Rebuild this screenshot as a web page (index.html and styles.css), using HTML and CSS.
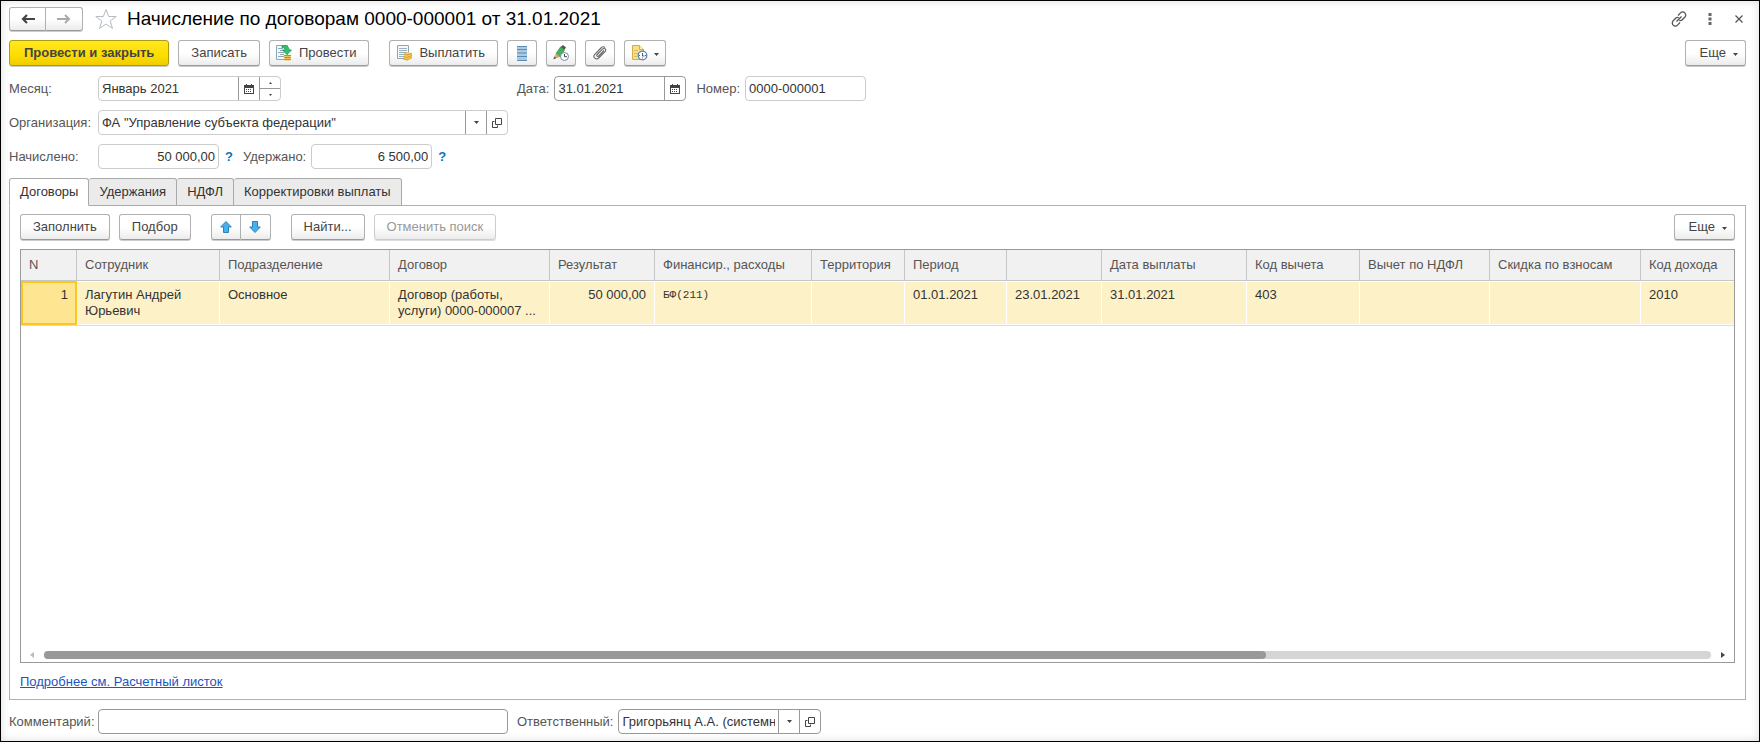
FILE: index.html
```html
<!DOCTYPE html>
<html lang="ru">
<head>
<meta charset="utf-8">
<title>Начисление по договорам 0000-000001 от 31.01.2021</title>
<link rel="stylesheet" href="styles.css">
</head>
<body>
<svg class="defs" aria-hidden="true">
  <symbol id="calendar" viewBox="0 0 10 10"><path d="M0 1h10v9H0zM1 4v5h8V4z" fill="#444" fill-rule="evenodd"/><path d="M2 0h1v2H2zM7 0h1v2H7z" fill="#444"/><path d="M2 5h1v1H2zM4 5h1v1H4zM6 5h1v1H6zM2 7h1v1H2zM4 7h1v1H4zM6 7h1v1H6z" fill="#444"/></symbol>
  <symbol id="open" viewBox="0 0 10 10"><path d="M3.500 .5h6v6h-6zM2.500 3.500h-2v6h5v-2" fill="none" stroke="#444"/></symbol>
  <symbol id="caret" viewBox="0 0 5 3"><path d="M0 0h5L2.500 3z" fill="#444"/></symbol>
</svg>
<main class="window">
  <header class="titlebar">
    <div class="pair">
      <button class="btn nav" aria-label="Назад"><svg width="14" height="10" viewBox="0 0 14 10"><path d="M14 5H3M6 1L2 5l4 4" fill="none" stroke="#444" stroke-width="2.200"/></svg></button>
      <button class="btn nav" aria-label="Вперед"><svg width="14" height="10" viewBox="0 0 14 10"><path d="M0 5h11M8 1l4 4-4 4" fill="none" stroke="#aaa" stroke-width="2"/></svg></button>
    </div>
    <button class="plain" aria-label="Избранное"><svg width="24" height="22" viewBox="0 0 24 22"><path d="M12 1.500l2.700 7h7.500l-6 4.500 2.300 7.500-6.500-4.500-6.500 4.500L7.800 13l-6-4.500h7.500z" fill="#fff" stroke="#b5bbc2"/></svg></button>
    <h1>Начисление по договорам 0000-000001 от 31.01.2021</h1>
    <div class="window-tools">
      <button class="plain" aria-label="Ссылка"><svg width="16" height="16" viewBox="0 0 16 16" fill="none" stroke="#555" stroke-width="1.300"><path d="M7 4.500l2.500-2.600a2.900 2.900 0 0 1 4.300 0 3 3 0 0 1 0 4.300l-2.500 2.500a2.900 2.900 0 0 1-3 .7M9 11.500l-2.500 2.600a2.900 2.900 0 0 1-4.300 0 3 3 0 0 1 0-4.300l2.500-2.500a2.900 2.900 0 0 1 3-.7M5.500 10.500l5-5"/></svg></button>
      <button class="plain" aria-label="Меню"><svg width="4" height="12" viewBox="0 0 4 12"><path d="M.5 0h3v3h-3zM.5 4.500h3v3h-3zM.5 9h3v3h-3z" fill="#666"/></svg></button>
      <button class="plain" aria-label="Закрыть"><svg width="12" height="12" viewBox="-2 -2 12 12"><path d="M.5 .5l7 7M7.500 .5l-7 7" stroke="#555" stroke-width="1.300"/></svg></button>
    </div>
  </header>

  <div class="toolbar">
    <button class="btn primary">Провести и закрыть</button>
    <button class="btn">Записать</button>
    <button class="btn with-icon"><svg width="16" height="16" viewBox="0 0 16 16"><path d="M.5 .5h11v14H.5z" fill="#f4f8fb" stroke="#8da6b8"/><path d="M2 3.500h5M4 5.500h4M2 7.500h6M4 9.500h4M2 11.500h6" stroke="#8da6b8"/><path d="M6 1c4-1 7 0 7 4h2.500L11 9.500 6.500 5H9c0-2-1-2.500-3-2.500z" fill="#2fc46b" stroke="#16984a" stroke-width=".8"/><path d="M8.500 10h6v5.500h-6z" fill="#f5c342"/><path d="M8 10.500h7M8 12.500h7M8 14.500h7" stroke="#c98c14"/></svg>Провести</button>
    <button class="btn with-icon apart"><svg width="16" height="16" viewBox="0 0 16 16"><path d="M1.500 .5h11v13h-11z" fill="#f4f8fb" stroke="#8da6b8"/><path d="M3 3.500h8M3 5.500h8M3 7.500h8M3 9.500h5M3 11.500h4" stroke="#9bb1c0"/><path d="M8 8.500l4-1.500 4 1.500v4.500l-5 2.500-4-1z" fill="#f7cd5a"/><path d="M8 9l3 1 5-1.500M7 11.500l4 1 5-2M7 13.500l4 1.500 5-2.500" fill="none" stroke="#c58612" stroke-width=".7"/></svg>Выплатить</button>
    <button class="btn icon" aria-label="Список"><svg width="12" height="15" viewBox="0 0 12 15"><path d="M1 0h10v15H1z" fill="#a9cae5"/><path d="M1 .5h10M1 3.500h10M1 7h10M1 10.500h10M1 14.500h10" stroke="#5c8bb4"/></svg></button>
    <button class="btn icon" aria-label="Подписать"><svg width="16" height="16" viewBox="0 0 16 16"><path d="M7.500 2L10 0l3 2.500-1.500 2.300z" fill="#555"/><path d="M7.500 2L3 8.500 7 12l4.500-7z" fill="#43b35b" stroke="#277c3b" stroke-width=".6"/><path d="M3 8.500L.5 14 7 12z" fill="#d9a76b"/><path d="M1.500 11.500L.3 14.200 3 13.200z" fill="#444"/><circle cx="11.500" cy="11.500" r="4" fill="#fff" stroke="#6f8ca5"/><path d="M11.500 9v2.700H14" fill="none" stroke="#444"/></svg></button>
    <button class="btn icon" aria-label="Файлы"><svg width="14" height="14" viewBox="0 0 14 14" fill="none" stroke="#666" stroke-width="1.100"><path d="M11 4.500L5.700 10c-1.200 1.200-2.700-.3-1.500-1.500l5.300-5.300c2-2 4.300.5 2.500 2.500L5.700 12C3 14.500-.7 11 1.800 8.300L8 2c1.500-1.500 3-1.500 4-.500"/></svg></button>
    <button class="btn icon menu" aria-label="Напоминание"><svg width="17" height="16" viewBox="0 0 17 16"><path d="M1.500 .5h7l4 4v10h-11z" fill="#f9df8c" stroke="#d3ac4c"/><path d="M8.500 .5v4h4" fill="#fff3c4" stroke="#d3ac4c"/><path d="M3 5.500h4M3 8.500h4M3 11.500h3" stroke="#dcb863"/><circle cx="11.500" cy="10.500" r="4.300" fill="#fff" stroke="#5686b4" stroke-width="1.300"/><path d="M11.500 8v3h2" fill="none" stroke="#345f8c"/><path d="M8 10.500h1M14 10.500h1M11 13h1" stroke="#d33"/></svg><svg class="caret" width="5" height="3"><use href="#caret"/></svg></button>
    <button class="btn more">Еще<svg class="caret" width="5" height="3"><use href="#caret"/></svg></button>
  </div>

  <form class="form">
    <div class="row">
      <div class="left">
        <label for="month">Месяц:</label>
        <div class="field month"><input id="month" value="Январь 2021"><button type="button" aria-label="Выбрать месяц"><svg width="10" height="10"><use href="#calendar"/></svg></button><div class="spin"><button type="button" aria-label="Следующий"><svg class="up" width="3" height="2"><use href="#caret"/></svg></button><button type="button" aria-label="Предыдущий"><svg width="3" height="2"><use href="#caret"/></svg></button></div></div>
      </div>
      <label for="date">Дата:</label>
      <div class="field strong date"><input id="date" value="31.01.2021"><button type="button" aria-label="Выбрать дату"><svg width="10" height="10"><use href="#calendar"/></svg></button></div>
      <label for="number">Номер:</label>
      <div class="field number"><input id="number" value="0000-000001"></div>
    </div>
    <div class="row">
      <div class="left">
        <label for="org">Организация:</label>
        <div class="field wide"><input id="org" value="ФА &quot;Управление субъекта федерации&quot;"><button type="button" aria-label="Список"><svg width="5" height="3"><use href="#caret"/></svg></button><button type="button" aria-label="Открыть"><svg width="10" height="10"><use href="#open"/></svg></button></div>
      </div>
    </div>
    <div class="row">
      <div class="left">
        <label for="accrued">Начислено:</label>
        <div class="field number"><input class="sum" id="accrued" value="50 000,00"></div>
        <button type="button" class="help">?</button>
        <label for="held">Удержано:</label>
        <div class="field number"><input class="sum" id="held" value="6 500,00"></div>
        <button type="button" class="help">?</button>
      </div>
    </div>
  </form>

  <div class="tabs" role="tablist">
    <button class="tab active" role="tab" aria-selected="true">Договоры</button>
    <button class="tab" role="tab">Удержания</button>
    <button class="tab" role="tab">НДФЛ</button>
    <button class="tab" role="tab">Корректировки выплаты</button>
  </div>
  <section class="panel" role="tabpanel">
    <div class="toolbar">
      <button class="btn">Заполнить</button>
      <button class="btn">Подбор</button>
      <div class="pair apart">
        <button class="btn icon" aria-label="Вверх"><svg width="12" height="12" viewBox="0 0 12 12"><path d="M6 .5l5.300 5.500H8.500v5.500h-5V6H.7z" fill="#45b0ec" stroke="#2b83b8"/></svg></button>
        <button class="btn icon" aria-label="Вниз"><svg width="12" height="12" viewBox="0 0 12 12"><path d="M6 11.500L.7 6h2.800V.5h5V6h2.800z" fill="#45b0ec" stroke="#2b83b8"/></svg></button>
      </div>
      <button class="btn apart">Найти...</button>
      <button class="btn" disabled>Отменить поиск</button>
      <button class="btn more">Еще<svg class="caret" width="5" height="3"><use href="#caret"/></svg></button>
    </div>
    <div class="grid">
      <table>
        <colgroup><col class="w56"><col class="w143"><col class="w170"><col class="w160"><col class="w105"><col class="w157"><col class="w93"><col class="w102"><col class="w95"><col class="w145"><col class="w113"><col class="w130"><col class="w151"><col class="w94"></colgroup>
        <thead><tr><th>N</th><th>Сотрудник</th><th>Подразделение</th><th>Договор</th><th>Результат</th><th>Финансир., расходы</th><th>Территория</th><th>Период</th><th></th><th>Дата выплаты</th><th>Код вычета</th><th>Вычет по НДФЛ</th><th>Скидка по взносам</th><th>Код дохода</th></tr></thead>
        <tbody><tr><td class="num current">1</td><td>Лагутин Андрей Юрьевич</td><td>Основное</td><td>Договор (работы, услуги) 0000-000007 ...</td><td class="num">50 000,00</td><td class="mono">БФ(211)</td><td></td><td>01.01.2021</td><td>23.01.2021</td><td>31.01.2021</td><td>403</td><td></td><td></td><td>2010</td></tr></tbody>
      </table>
      <div class="scroll">
        <svg width="4" height="6" viewBox="0 0 4 6"><path d="M4 0v6L0 3z" fill="#bbb"/></svg>
        <div class="track"><div class="thumb"></div></div>
        <svg width="4" height="6" viewBox="0 0 4 6"><path d="M0 0v6l4-3z" fill="#444"/></svg>
      </div>
    </div>
    <a class="link" href="#">Подробнее см. Расчетный листок</a>
  </section>

  <footer class="row">
    <div class="left">
      <label for="comment">Комментарий:</label>
      <div class="field strong wide"><input id="comment"></div>
    </div>
    <label for="person">Ответственный:</label>
    <div class="field strong person"><input id="person" value="Григорьянц А.А. (системный)"><button type="button" aria-label="Список"><svg width="5" height="3"><use href="#caret"/></svg></button><button type="button" aria-label="Открыть"><svg width="10" height="10"><use href="#open"/></svg></button></div>
  </footer>
</main>
</body>
</html>
```
FILE: styles.css
```css
* { box-sizing: border-box; }
body { margin: 0; background: #fff; }
body, button, input { font: 13px/16px "Liberation Sans", Arial, sans-serif; color: #333; }
button { margin: 0; padding: 0; }
svg { flex: none; display: block; }
.defs { position: absolute; width: 0; height: 0; }

.window {
  display: flex;
  flex-direction: column;
  min-height: 100vh;
  padding: 5px 13px 7px 8px;
  border: 1px solid #000;
  box-shadow: inset 0 0 8px rgba(0, 0, 0, 0.14);
}

.titlebar { display: flex; align-items: center; height: 25px; margin-bottom: 9px; }
.titlebar h1 { margin: 0 0 0 9px; font-size: 19px; line-height: 24px; font-weight: 400; color: #000; }
.plain { display: flex; border: 0; background: none; }
.titlebar > .plain { margin-left: 11px; }
.window-tools { display: flex; align-items: center; gap: 21px; margin-left: auto; padding-right: 1px; }

.toolbar { display: flex; gap: 9px; }
.btn {
  display: flex;
  align-items: center;
  justify-content: center;
  height: 26px;
  padding: 0 12px;
  border: 1px solid #b0b0b0;
  border-bottom-color: #999;
  border-radius: 3px;
  box-shadow: 0 1px #ccc;
  background: linear-gradient(#fff 50%, #ececec);
  color: #444;
  white-space: nowrap;
}
.btn:disabled { color: #999; border-color: #ccc; box-shadow: 0 1px #ddd; }
.btn.primary {
  padding: 0 14px;
  font-weight: 700;
  background: linear-gradient(#ffe81f, #fddd00 60%, #f0cd00);
  border-color: #b09a10;
}
.btn.with-icon { gap: 7px; padding: 0 12px 0 6px; }
.btn.icon { width: 30px; padding: 0; }
.btn.icon.menu { width: 42px; gap: 6px; }
.btn.more { gap: 7px; padding: 0 7px 0 14px; margin-left: auto; }
.caret { margin-top: 3px; }
.apart { margin-left: 11px; }
.pair { display: flex; }
.pair .btn:first-child { border-radius: 3px 0 0 3px; }
.pair .btn:last-child { border-radius: 0 3px 3px 0; border-left: 0; }
.btn.nav { width: 37px; height: 24px; padding: 0; }

.form { display: flex; flex-direction: column; gap: 9px; padding: 10px 0 9px; }
.row { display: flex; align-items: center; }
.row label { margin-right: 5px; color: #555; }
.left { display: flex; align-items: center; width: 508px; }
.left > label:first-child { width: 89px; margin: 0; }
.field {
  display: flex;
  height: 25px;
  border: 1px solid #ccc;
  border-radius: 4px;
  background: #fff;
}
.field.strong { border-color: #999; }
.field input { flex: 1; min-width: 0; padding: 0 3px; border: 0; background: none; outline: 0; }
.field input.sum { text-align: right; }
.field > button, .spin {
  display: flex;
  align-items: center;
  justify-content: center;
  width: 21px;
  border: 0;
  border-left: 1px solid #999;
  background: none;
}
.spin { flex-direction: column; }
.spin button { display: flex; flex: 1; width: 100%; align-items: center; justify-content: center; border: 0; background: none; }
.spin button + button { border-top: 1px solid #999; }
.up { transform: rotate(180deg); }
.field.month { width: 183px; }
.field.date { width: 132px; margin-right: 10px; }
.field.number { width: 121px; }
.field.wide { width: 410px; }
.field.person { width: 203px; }
.help { width: 20px; margin-right: 4px; border: 0; background: none; color: #0b74c4; font-weight: 700; }

.tabs { display: flex; height: 28px; margin-bottom: -1px; z-index: 1; }
.tab {
  padding: 0 10px;
  border: 1px solid #aaa;
  border-left-width: 0;
  border-radius: 3px 3px 0 0;
  background: #ebebeb;
}
.tab.active { border-left-width: 1px; border-bottom-color: #fff; background: #fff; }

.panel {
  display: flex;
  flex: 1;
  flex-direction: column;
  padding: 8px 10px 9px;
  border: 1px solid #b0b0b0;
}
.grid {
  display: flex;
  flex: 1;
  flex-direction: column;
  justify-content: space-between;
  margin: 9px 0 11px;
  border: 1px solid #999;
  overflow: hidden;
}
table { width: 100%; table-layout: fixed; border-collapse: separate; border-spacing: 0; }
th, td { padding: 0 8px; text-align: left; font-weight: 400; overflow: hidden; }
th { height: 31px; background: #f1f1f1; border-right: 1px solid #c4c6c8; border-bottom: 1px solid #c4c6c8; color: #555; white-space: nowrap; }
td { height: 44px; padding-top: 5px; vertical-align: top; background: #fdf1c8; border: 1px solid #fff; border-width: 1px 1px 1px 0; }
th:last-child, td:last-child { border-right: 0; }
tbody { box-shadow: 0 1px #ddd; }
td.num { text-align: right; }
td.current { padding: 4px 7px 0; border: 2px solid #f9c822; background: #fee591; }
td.mono { font: 11px/16px "Liberation Mono", monospace; }
.w56 { width: 56px; } .w143 { width: 143px; } .w170 { width: 170px; } .w160 { width: 160px; }
.w105 { width: 105px; } .w157 { width: 157px; } .w93 { width: 93px; } .w102 { width: 102px; }
.w95 { width: 95px; } .w145 { width: 145px; } .w113 { width: 113px; } .w130 { width: 130px; }
.w151 { width: 151px; } .w94 { width: 94px; }

.scroll { display: flex; align-items: center; gap: 10px; padding: 0 9px 3px; }
.track { flex: 1; height: 8px; border-radius: 4px; background: #d5d5d5; }
.thumb { width: 73.3%; height: 8px; border-radius: 4px; background: #999; }
.link { align-self: flex-start; color: #1a55c0; }
footer.row { margin-top: 9px; }
```
